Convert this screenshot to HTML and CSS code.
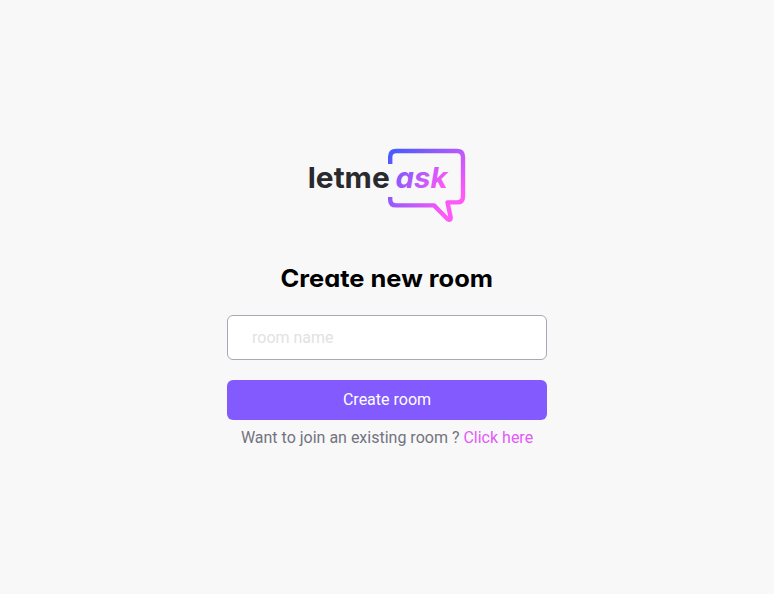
FILE: index.html
```html
<!DOCTYPE html>
<html lang="en">
<head>
<meta charset="utf-8">
<title>Letmeask</title>
<link rel="stylesheet" href="styles.css">
</head>
<body>
<main class="content">
<svg class="logo" width="158" height="75" viewBox="0 0 158 75" role="img" aria-label="letmeask">
<defs>
<linearGradient id="brand" gradientUnits="userSpaceOnUse" x1="84" y1="5" x2="140" y2="60">
<stop offset="0" stop-color="#485bff"/><stop offset="1" stop-color="#ff59f8"/>
</linearGradient>
<linearGradient id="accent" gradientUnits="userSpaceOnUse" x1="72" y1="10" x2="130" y2="50">
<stop offset="0" stop-color="#485bff"/><stop offset="1" stop-color="#ff59f8"/>
</linearGradient>
</defs>
<path class="bubble" d="M82.200 16V9Q82.200 3 88.200 3H149Q155 3 155 9V48.400Q155 54.400 149 54.400H139.500L142.700 69.500Q143 73 139.500 71L126 57.400H88.200Q82.200 57.400 82.200 51.400V49"/>
<text class="wordmark" x="-0.300" y="40" textLength="82" lengthAdjust="spacingAndGlyphs">letme</text>
<text class="wordmark ask" x="87.500" y="40" textLength="52" lengthAdjust="spacingAndGlyphs">ask</text>
</svg>
<h2 class="title"><svg width="214" height="36"><text x="0.500" y="26" textLength="212.500" lengthAdjust="spacingAndGlyphs">Create new room</text></svg></h2>
<form class="form">
<input class="field" type="text" placeholder="room name">
<button class="button" type="button">Create room</button>
</form>
<p class="hint">Want to join an existing room ? <a class="link" href="#">Click here</a></p>
</main>
</body>
</html>
```
FILE: styles.css
```css
* { box-sizing: border-box; margin: 0; padding: 0; }
body { min-height: 100vh; display: flex; justify-content: center; background: #f8f8f8; font-family: Roboto, sans-serif; font-size: 16px; }
.content { width: 320px; padding-top: 148px; display: flex; flex-direction: column; align-items: center; }
.logo { display: block; overflow: visible; }
.bubble { fill: none; stroke: url(#brand); stroke-width: 4.400; stroke-linejoin: round; }
.wordmark { font-family: Inter, sans-serif; font-size: 29px; font-weight: 700; fill: #29292e; }
.ask { font-style: italic; font-feature-settings: "cv11"; fill: url(#accent); }
.title { height: 36px; margin-top: 38px; font-size: 24px; }
.title svg { display: block; font-family: Inter, sans-serif; font-weight: 750; font-feature-settings: "cv11"; }
.form { width: 100%; margin-top: 18px; display: flex; flex-direction: column; gap: 20px; }
.field { height: 45px; padding: 0 24px; border: 1px solid #a8a8b3; border-radius: 6px; background: #fff; font: inherit; }
.field::placeholder { color: #e2e2e2; }
.button { height: 40px; padding-bottom: 2px; border: 0; border-radius: 6px; background: #835afd; color: #fff; font: inherit; }
.hint { margin-top: 8px; line-height: 19px; color: #737380; white-space: nowrap; }
.link { color: #e559f9; text-decoration: none; }
```
